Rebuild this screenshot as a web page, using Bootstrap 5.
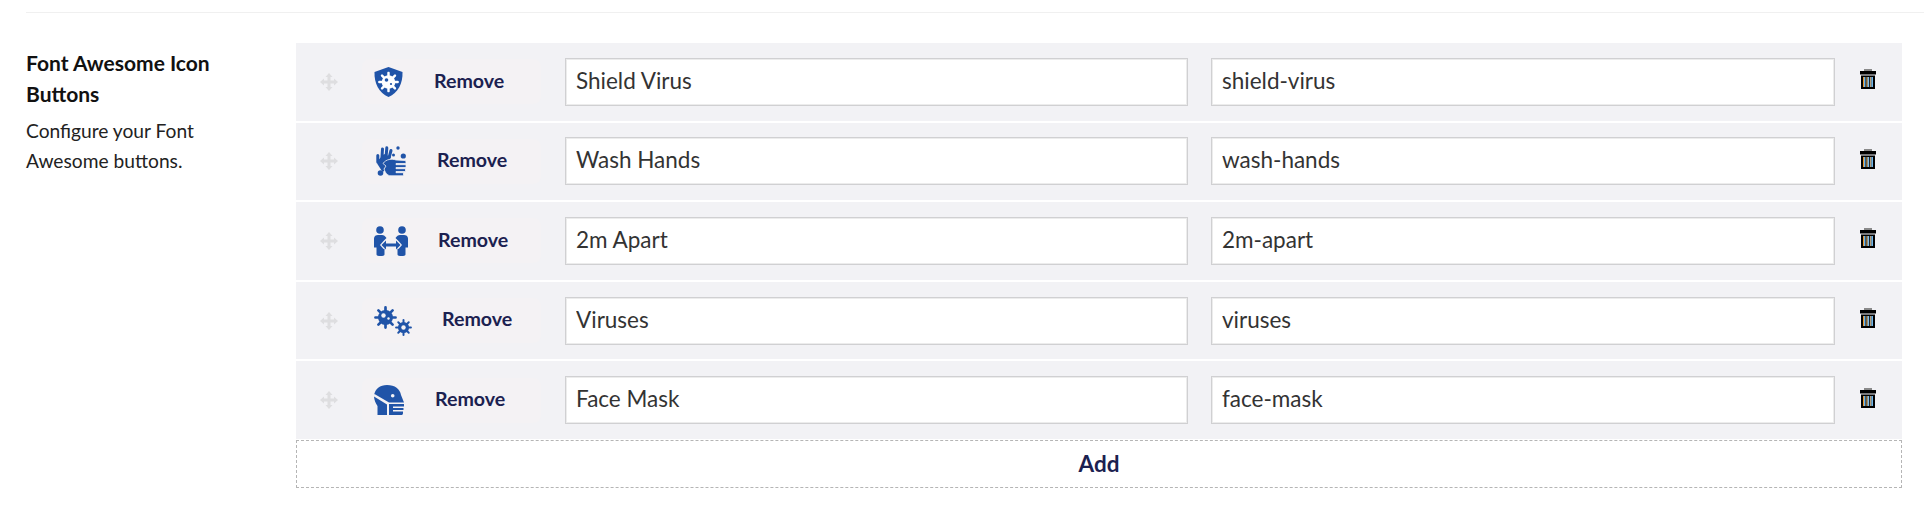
<!DOCTYPE html>
<html lang="en">
  <head>
    <meta charset="UTF-8" />
    <meta name="viewport" content="width=device-width, initial-scale=1" />
    <title>Font Awesome Icon Buttons</title>
    <link href="https://cdn.jsdelivr.net/npm/bootstrap@5.3.3/dist/css/bootstrap.min.css" rel="stylesheet" />
    <style>
      body {
        background-color: #fff;
        font-family: "Lato", sans-serif;
        color: #222;
        overflow: hidden;
      }

      .top-rule {
        height: 1px;
        margin: 12px 0 30px 26px;
        background-color: #f0f0f0;
      }

      .side-info {
        width: 270px;
        margin-left: 26px;
        padding-top: 4px;
      }

      .side-title {
        width: 225px;
        font-size: 21px;
        font-weight: 700;
        color: #111;
        margin-bottom: 7px;
        line-height: 31px;
      }

      .side-text {
        font-size: 19.2px;
        width: 190px;
        line-height: 30px;
      }

      .repeater {
        width: 1606px;
      }

      .rep-row {
        height: 77.6px;
        margin-bottom: 2px;
        background-color: #f2f2f5;
      }

      .drag-cell {
        width: 66px;
        padding-left: 24px;
      }

      .remove-box {
        width: 179px;
        height: 45px;
        padding-left: 12px;
        margin-right: 24px;
        background-color: #f4f2f4;
        border-radius: 8px;
      }

      .remove-label {
        margin-left: 31px;
        margin-bottom: 3px;
        font-size: 19.6px;
        font-weight: 700;
        color: #1b2150;
      }

      .wide-gap {
        margin-left: 30px;
      }

      .hand-ico {
        margin-left: 2px;
      }

      .rep-input {
        width: 623px;
        height: 48px;
        margin-right: 23px;
        padding: 0 10px 3px;
        font-size: 22.5px;
        color: #333;
        border: 1px solid #d0d0d2;
        border-radius: 0;
        box-shadow: inset 0 0 0 1px #ececec;
      }

      .rep-input-last {
        width: 624px;
        margin-right: 0;
      }

      .trash-cell {
        margin-left: 25px;
        margin-top: -5px;
      }

      .add-btn {
        height: 48px;
        margin-top: -1px;
        padding-bottom: 9px;
        font-size: 22.5px;
        font-weight: 700;
        color: #1b2150;
        border: 1px dashed #b5b5b5;
        border-radius: 0;
      }

      .blue-ico {
        fill: #2054a8;
        flex-shrink: 0;
      }
    </style>
  </head>
  <body>
    <svg width="0" height="0" class="position-absolute">
      <symbol id="germ" viewBox="-12 -12 24 24">
        <g stroke="currentColor" stroke-width="2.800" stroke-linecap="round">
          <circle r="7.800" stroke="none" fill="currentColor" />
          <path d="M0-10.500V10.500M-10.500 0H10.500M-7.400-7.400 7.400 7.400M-7.400 7.400 7.400-7.400" />
        </g>
      </symbol>
      <symbol id="arrows-move" viewBox="0 0 18 18">
        <path d="M9 0l3.500 4H10.500V7.500H14V5.500l4 3.500-4 3.500v-2H10.500V14h2L9 18l-3.500-4h2V10.500H4v2L0 9l4-3.500v2H7.500V4h-2z" fill="#dedee0" />
      </symbol>
      <symbol id="trash-can" viewBox="0 0 16 20">
        <path d="M4 0h8v2H4z" fill="#8a8a8a" />
        <path d="M0 2h16v3.500H0z" fill="#000" />
        <path d="M1 6.500h14V20H1z" fill="#000" />
        <path d="M3 8h1v10H3z" fill="#e8952a" />
        <path d="M4 8h1.500v10H4z" fill="#6fb6ea" />
        <path d="M6.500 8h1.200v10H6.500z" fill="#f0b566" />
        <path d="M7.700 8H9.200v10H7.700z" fill="#7fbdea" />
        <path d="M10.200 8h1.200v10h-1.200z" fill="#e6c79c" />
        <path d="M11.400 8h1.600v10h-1.600z" fill="#6fb6ea" />
      </symbol>
    </svg>

    <div class="top-rule"></div>

    <div class="d-flex">
      <div class="side-info">
        <div class="side-title">Font Awesome Icon Buttons</div>
        <div class="side-text">Configure your Font Awesome buttons.</div>
      </div>

      <div class="repeater">
        <div class="rep-row d-flex align-items-center">
          <div class="drag-cell"><svg class="d-block" width="18" height="18"><use href="#arrows-move" /></svg></div>
          <div class="remove-box d-flex align-items-center">
            <svg class="blue-ico" width="29" height="30" viewBox="0 0 29 30">
              <path d="M14.500 0 28.500 5C29 16 24 26 14.500 30 5 26 0 16 .5 5z" />
              <use href="#germ" x="4" y="4.500" width="21" height="21" color="#fff" />
              <circle cx="12.500" cy="13" r="1.800" fill="#2054a8" />
              <circle cx="17" cy="17" r="1.100" fill="#2054a8" />
            </svg>
            <span class="remove-label">Remove</span>
          </div>
          <input class="form-control rep-input" type="text" value="Shield Virus" />
          <input class="form-control rep-input rep-input-last" type="text" value="shield-virus" />
          <div class="trash-cell"><svg class="d-block" width="16" height="20"><use href="#trash-can" /></svg></div>
        </div>

        <div class="rep-row d-flex align-items-center">
          <div class="drag-cell"><svg class="d-block" width="18" height="18"><use href="#arrows-move" /></svg></div>
          <div class="remove-box d-flex align-items-center">
            <svg class="blue-ico hand-ico" width="30" height="30" viewBox="0 0 30 30">
              <g stroke="#2054a8" stroke-width="3" stroke-linecap="round">
                <path d="M1.800 9.500 1.800 16M6.500 3 5.800 14M10.800 1.800 10 12M15 4.500 13 12M2.500 17 7 24" />
              </g>
              <path d="M1.500 15 8 8 15 11 12 15 10 21 6 24z" />
              <path d="M7 17.500C10 13 16 12.500 20 14L29 14.500C30.500 15 30.500 17.500 29 17.500H20V18.700H30V21.500H20V22.700H29.500V25.500H20V26.700H27.500V29.800H15C11 29.800 9 26 8 23L10 20z" stroke="#f4f2f4" stroke-width=".8" />
              <circle cx="22" cy="2" r="1.700" />
              <circle cx="27.300" cy="10" r="2.600" />
              <circle cx="4.500" cy="27" r="2.800" />
              <circle cx="17.500" cy="9" r="1.500" />
            </svg>
            <span class="remove-label">Remove</span>
          </div>
          <input class="form-control rep-input" type="text" value="Wash Hands" />
          <input class="form-control rep-input rep-input-last" type="text" value="wash-hands" />
          <div class="trash-cell"><svg class="d-block" width="16" height="20"><use href="#trash-can" /></svg></div>
        </div>

        <div class="rep-row d-flex align-items-center">
          <div class="drag-cell"><svg class="d-block" width="18" height="18"><use href="#arrows-move" /></svg></div>
          <div class="remove-box d-flex align-items-center">
            <svg class="blue-ico" width="34" height="30" viewBox="0 0 34 30">
              <circle cx="6" cy="4" r="3.800" />
              <circle cx="28" cy="4" r="3.800" />
              <path d="M0 12.500C0 10 2 9 4 9H8C10 9 11 10 12.500 12L9.500 15 6 19 9.500 23 10.500 22.500V28.500C10.500 30.500 2.500 30.500 2.500 28.500V21.500H0z" />
              <path d="M34 12.500C34 10 32 9 30 9H26C24 9 23 10 21.500 12L24.500 15 28 19 24.500 23 23.500 22.500V28.500C23.500 30.500 31.500 30.500 31.500 28.500V21.500H34z" />
              <path d="M7.500 19 12 14.500V17.500H22V14.500L26.500 19 22 23.500V20.500H12V23.500z" />
            </svg>
            <span class="remove-label wide-gap">Remove</span>
          </div>
          <input class="form-control rep-input" type="text" value="2m Apart" />
          <input class="form-control rep-input rep-input-last" type="text" value="2m-apart" />
          <div class="trash-cell"><svg class="d-block" width="16" height="20"><use href="#trash-can" /></svg></div>
        </div>

        <div class="rep-row d-flex align-items-center">
          <div class="drag-cell"><svg class="d-block" width="18" height="18"><use href="#arrows-move" /></svg></div>
          <div class="remove-box d-flex align-items-center">
            <svg class="blue-ico" width="38" height="30" viewBox="0 0 38 30">
              <use href="#germ" x="0" y="0" width="23" height="23" color="#2054a8" />
              <circle cx="9.500" cy="9.500" r="2.200" fill="#f4f2f4" />
              <circle cx="14.500" cy="12.500" r="1.200" fill="#f4f2f4" />
              <use href="#germ" x="21" y="13" width="17" height="17" color="#2054a8" />
              <circle cx="29.500" cy="21.500" r="2.200" fill="#f4f2f4" />
            </svg>
            <span class="remove-label wide-gap">Remove</span>
          </div>
          <input class="form-control rep-input" type="text" value="Viruses" />
          <input class="form-control rep-input rep-input-last" type="text" value="viruses" />
          <div class="trash-cell"><svg class="d-block" width="16" height="20"><use href="#trash-can" /></svg></div>
        </div>

        <div class="rep-row d-flex align-items-center">
          <div class="drag-cell"><svg class="d-block" width="18" height="18"><use href="#arrows-move" /></svg></div>
          <div class="remove-box d-flex align-items-center">
            <svg class="blue-ico" width="30" height="30" viewBox="0 0 30 30">
              <path d="M0 10.500C1 4 6 0 13 0 21 0 26 4 27 10L30 17.500H15L.5 9z" />
              <path d="M0 11.500 13 19.500V30H3.500V21C1.500 18 .2 15 0 11.500z" />
              <path d="M15 19H30V21.500H19V23H29.500V25H19V26.500H29V28.200C29 29.500 28 30 27 30H15z" />
              <circle cx="18.700" cy="10.700" r="1.800" fill="#f4f2f4" />
            </svg>
            <span class="remove-label">Remove</span>
          </div>
          <input class="form-control rep-input" type="text" value="Face Mask" />
          <input class="form-control rep-input rep-input-last" type="text" value="face-mask" />
          <div class="trash-cell"><svg class="d-block" width="16" height="20"><use href="#trash-can" /></svg></div>
        </div>

        <button class="btn add-btn w-100" type="button">Add</button>
      </div>
    </div>
  </body>
</html>
